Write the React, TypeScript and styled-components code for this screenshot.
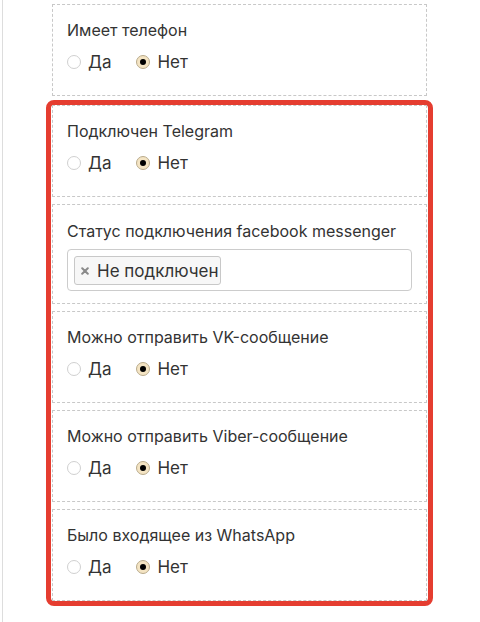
import React from "react";
import styled, { createGlobalStyle } from "styled-components";

const GlobalStyle = createGlobalStyle`
  body {
    margin: 0;
    background: #ffffff;
    font-family: Inter, "Noto Sans", sans-serif;
    color: #333333;
  }
`;

const Page = styled.div`
  margin-left: 2px;
  border-left: 1px solid #dddddd;
  min-height: 622px;
  padding: 4px 0 0 49px;
  box-sizing: border-box;
`;

const Column = styled.div`
  width: 375px;
  display: flex;
  flex-direction: column;
`;

const Highlight = styled.div`
  margin: 4px 0 0 -6px;
  width: 387px;
  box-sizing: border-box;
  border: 5px solid #e53d30;
  border-radius: 8px;
  padding: 0 1px;
  display: flex;
  flex-direction: column;
  gap: 7px;
`;

const Card = styled.div<{ $tall?: boolean }>`
  border: 1px dashed #c8c8c8;
  box-sizing: border-box;
  height: ${(p) => (p.$tall ? "100px" : "92px")};
  padding: ${(p) => (p.$tall ? "16px 14px 0" : "15px 14px 0")};
  display: flex;
  flex-direction: column;
`;

const Label = styled.div`
  font-size: 16px;
  line-height: 20px;
  color: #333333;
`;

const RadioRow = styled.div`
  margin-top: 12px;
  display: flex;
  align-items: center;
  gap: 25px;
  height: 20px;
`;

const Option = styled.label`
  display: flex;
  align-items: center;
  gap: 7px;
  font-size: 17px;
  color: #333333;
`;

const Circle = styled.span<{ $checked?: boolean }>`
  width: 14px;
  height: 14px;
  border-radius: 50%;
  box-sizing: border-box;
  border: 1px solid ${(p) => (p.$checked ? "#b9ab8c" : "#d0d0d0")};
  background: ${(p) => (p.$checked ? "#f4e4c3" : "#ffffff")};
  display: flex;
  align-items: center;
  justify-content: center;
  &::after {
    content: "";
    display: ${(p) => (p.$checked ? "block" : "none")};
    width: 6px;
    height: 6px;
    border-radius: 50%;
    background: #000000;
  }
`;

const TagInput = styled.div`
  margin-top: 8px;
  height: 42px;
  box-sizing: border-box;
  border: 1px solid #cccccc;
  border-radius: 4px;
  padding: 6px;
  display: flex;
  align-items: flex-start;
`;

const Tag = styled.div`
  height: 29px;
  box-sizing: border-box;
  border: 1px solid #c8c8c8;
  border-radius: 3px;
  background: #f7f7f7;
  display: flex;
  align-items: center;
  padding: 0 2px 0 6px;
  gap: 8px;
  font-size: 17px;
  color: #333333;
`;

const Radio = ({ checked, text }: { checked?: boolean; text: string }) => (
  <Option>
    <Circle $checked={checked} />
    {text}
  </Option>
);

const YesNo = ({ label }: { label: string }) => (
  <Card>
    <Label>{label}</Label>
    <RadioRow>
      <Radio text="Да" />
      <Radio checked text="Нет" />
    </RadioRow>
  </Card>
);

const App: React.FC = () => {
  return (
    <>
      <GlobalStyle />
      <Page>
        <Column>
          <YesNo label="Имеет телефон" />
          <Highlight>
            <YesNo label="Подключен Telegram" />
            <Card $tall>
              <Label>Статус подключения facebook messenger</Label>
              <TagInput>
                <Tag>
                  <svg width="8" height="8" viewBox="0 0 8 8">
                    <path d="M1.2 1.2 L6.8 6.8 M6.8 1.2 L1.2 6.8" stroke="#8a8a8a" strokeWidth="2" strokeLinecap="round" />
                  </svg>
                  Не подключен
                </Tag>
              </TagInput>
            </Card>
            <YesNo label="Можно отправить VK-сообщение" />
            <YesNo label="Можно отправить Viber-сообщение" />
            <YesNo label="Было входящее из WhatsApp" />
          </Highlight>
        </Column>
      </Page>
    </>
  );
};

export default App;
